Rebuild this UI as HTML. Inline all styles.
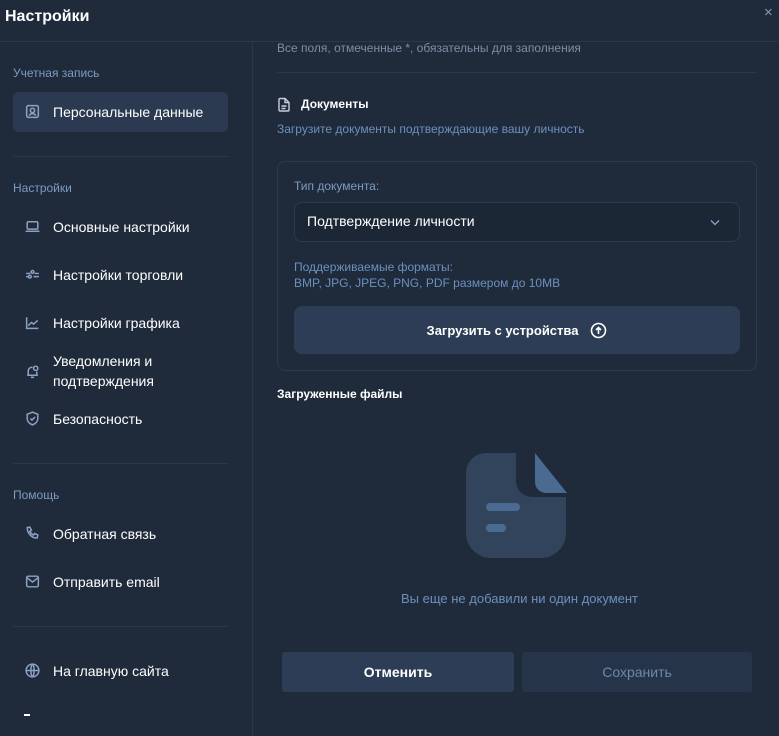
<!DOCTYPE html>
<html><head><meta charset="utf-8"><style>
*{box-sizing:border-box;margin:0;padding:0}
body{width:779px;height:736px;overflow:hidden;background:#1f2b3b;font-family:"Liberation Sans",Arial,sans-serif;position:relative;color:#fff}
.a{position:absolute}
.sec{color:#7d9bc2;font-size:12px}
.item{position:absolute;left:24px;font-size:14px;color:#fff;display:flex;align-items:center}
.item svg{width:17px;height:17px;margin-right:12px;stroke:#8ca3c3;fill:none;stroke-width:1.4}
.hr{position:absolute;height:1px;background:#2a3849}
</style></head><body>
<div class="a" style="left:5px;top:8px;font-size:16px;font-weight:bold">Настройки</div>
<div class="a" style="left:764px;top:4px;color:#7d9bc2;font-size:15px">×</div>
<div class="hr" style="left:0;top:41px;width:779px"></div>
<div class="a" style="left:252px;top:41px;width:1px;height:695px;background:#2a3849"></div>

<div class="a sec" style="left:13px;top:66px">Учетная запись</div>
<div class="a" style="left:13px;top:92px;width:215px;height:40px;background:#2b3a50;border-radius:6px"></div>
<div class="item" style="top:103px"><svg viewBox="0 0 16 16"><rect x="2.5" y="2.5" width="11" height="11" rx="1.5"/><circle cx="8" cy="7" r="2"/><path d="M5 12c.5-1.5 1.5-2 3-2s2.5.5 3 2"/></svg>Персональные данные</div>
<div class="hr" style="left:13px;top:156px;width:215px"></div>
<div class="a sec" style="left:13px;top:181px">Настройки</div>
<div class="item" style="top:218px"><svg viewBox="0 0 16 16"><rect x="3" y="3.5" width="10" height="7" rx="1"/><path d="M1.5 12.5h13"/></svg>Основные настройки</div>
<div class="item" style="top:266px"><svg viewBox="0 0 16 16"><path d="M2 7h4M2 10h2M9 10h5M10 7h4"/><circle cx="5.5" cy="10" r="1.3"/><circle cx="8" cy="5.5" r="1.3"/></svg>Настройки торговли</div>
<div class="item" style="top:314px"><svg viewBox="0 0 16 16"><path d="M2.5 3v10.5h11M4 11l3-3 2 1.5 4-3.5"/></svg>Настройки графика</div>
<div class="item" style="top:351px;line-height:20px"><svg viewBox="0 0 16 16"><path d="M4 11V7.5a3.5 3.5 0 0 1 4-3.5M3 11.5h10M12 8v3M6.5 13.5h3"/><circle cx="11" cy="5" r="2"/></svg>Уведомления и<br>подтверждения</div>
<div class="item" style="top:410px"><svg viewBox="0 0 16 16"><path d="M8 2l5 2v4c0 3-2.5 5-5 6-2.5-1-5-3-5-6V4z"/><path d="M6 8l1.5 1.5L10.5 6.5"/></svg>Безопасность</div>
<div class="hr" style="left:13px;top:463px;width:215px"></div>
<div class="a sec" style="left:13px;top:488px">Помощь</div>
<div class="item" style="top:525px"><svg viewBox="0 0 16 16"><path d="M3 2.5l2.5-.5 1.5 3-1.5 1c.7 1.5 2 2.8 3.5 3.5l1-1.5 3 1.5-.5 2.5C8 13 3 8 3 2.5z"/></svg>Обратная связь</div>
<div class="item" style="top:573px"><svg viewBox="0 0 16 16"><rect x="2.5" y="3" width="11" height="10" rx="1.5"/><path d="M3 4.5l5 4 5-4"/></svg>Отправить email</div>
<div class="hr" style="left:13px;top:626px;width:215px"></div>
<div class="item" style="top:662px"><svg viewBox="0 0 16 16"><circle cx="8" cy="8" r="6"/><path d="M2 8h12M8 2c-2 2-2 10 0 12M8 2c2 2 2 10 0 12"/></svg>На главную сайта</div>
<div class="a" style="left:24px;top:714px;width:6px;height:2px;background:#fff"></div>

<div class="a" style="left:277px;top:41px;font-size:12px;color:#7d8ea6">Все поля, отмеченные *, обязательны для заполнения</div>
<div class="hr" style="left:277px;top:72px;width:480px"></div>
<svg class="a" style="left:277px;top:97px" width="14" height="15" viewBox="0 0 14 15" fill="none" stroke="#c5d0de" stroke-width="1.4"><path d="M2 2.5a1 1 0 0 1 1-1h5l4 4v7.5a1 1 0 0 1-1 1H3a1 1 0 0 1-1-1z"/><path d="M8 1.5v4h4M4.5 9h5M4.5 11.5h4"/></svg>
<div class="a" style="left:301px;top:97px;font-size:12px;font-weight:bold">Документы</div>
<div class="a" style="left:277px;top:122px;font-size:12px;color:#6c90bd">Загрузите документы подтверждающие вашу личность</div>
<div class="a" style="left:277px;top:161px;width:480px;height:210px;border:1px solid #2c3a4c;border-radius:8px"></div>
<div class="a" style="left:294px;top:179px;font-size:12px;color:#7d9bc2">Тип документа:</div>
<div class="a" style="left:294px;top:202px;width:446px;height:40px;border:1px solid #2c3a4c;border-radius:8px;background:#1c2736"></div>
<div class="a" style="left:307px;top:213px;font-size:14px">Подтверждение личности</div>
<svg class="a" style="left:710px;top:219px" width="10" height="7" viewBox="0 0 10 7" fill="none" stroke="#8ca3c3" stroke-width="1.3"><path d="M1 1.5l4 4 4-4"/></svg>
<div class="a" style="left:294px;top:259px;font-size:12px;color:#6c90bd;line-height:16px">Поддерживаемые форматы:<br>BMP, JPG, JPEG, PNG, PDF размером до 10MB</div>
<div class="a" style="left:294px;top:306px;width:446px;height:48px;border-radius:8px;background:#2c3d55;display:flex;align-items:center;justify-content:center;font-size:13px;font-weight:bold">Загрузить с устройства<svg style="margin-left:12px" width="17" height="17" viewBox="0 0 17 17" fill="none" stroke="#fff" stroke-width="1.6"><circle cx="8.5" cy="8.5" r="7"/><path d="M8.5 12V5.5M6 8l2.5-2.5L11 8"/></svg></div>
<div class="a" style="left:277px;top:387px;font-size:12px;font-weight:bold">Загруженные файлы</div>

<svg class="a" style="left:466px;top:451px" width="102" height="108" viewBox="0 0 102 108"><path d="M20 2h30v28a16 16 0 0 0 16 16h34v36a25 25 0 0 1-25 25H25A25 25 0 0 1 0 82V22A20 20 0 0 1 20 2z" fill="#31445c"/><path d="M69 2l32 40H80a11 11 0 0 1-11-11z" fill="#4b6a91"/><rect x="20" y="52" width="34" height="8" rx="4" fill="#4b6a91"/><rect x="20" y="73" width="20" height="8" rx="4" fill="#4b6a91"/></svg>
<div class="a" style="left:260px;top:591px;width:519px;text-align:center;font-size:13px;color:#6c90bd">Вы еще не добавили ни один документ</div>
<div class="a" style="left:282px;top:652px;width:232px;height:40px;border-radius:3px;background:#2c3d55;display:flex;align-items:center;justify-content:center;font-size:14px;font-weight:bold">Отменить</div>
<div class="a" style="left:522px;top:652px;width:230px;height:40px;border-radius:3px;background:#253448;display:flex;align-items:center;justify-content:center;font-size:14px;color:#6e88a8">Сохранить</div>
</body></html>
